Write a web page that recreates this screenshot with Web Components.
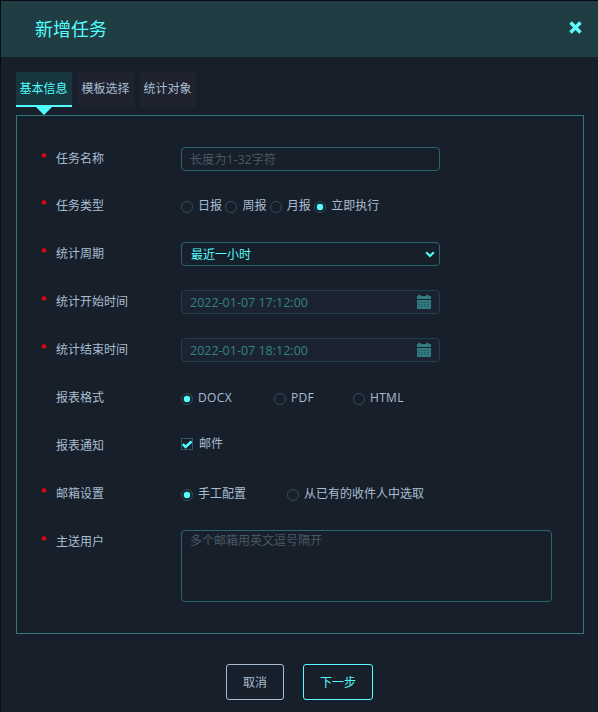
<!DOCTYPE html>
<html lang="zh-CN">
<head>
<meta charset="utf-8">
<title>新增任务</title>
<style>
  body {
    margin: 0;
    background-color: #090b14;
    font-family: "Open Sans", "Noto Sans CJK SC", sans-serif;
    font-size: 12px;
    color: #a9bdd2;
    --accent: #52fffe;
    --line: #31777b;
    --field-line: #2c656b;
  }
</style>
</head>
<body>
<task-dialog heading="新增任务">
  <tab-item slot="tabs" active>基本信息</tab-item>
  <tab-item slot="tabs">模板选择</tab-item>
  <tab-item slot="tabs">统计对象</tab-item>

  <form-row label="任务名称" required style="height: 47px">
    <text-field placeholder="长度为1-32字符" style="letter-spacing: .2px"></text-field>
  </form-row>
  <form-row label="任务类型" required>
    <radio-item style="width: 44.4px">日报</radio-item>
    <radio-item style="width: 44.4px">周报</radio-item>
    <radio-item style="width: 44.4px">月报</radio-item>
    <radio-item checked>立即执行</radio-item>
  </form-row>
  <form-row label="统计周期" required>
    <select-field>最近一小时</select-field>
  </form-row>
  <form-row label="统计开始时间" required>
    <date-field>2022-01-07 17:12:00</date-field>
  </form-row>
  <form-row label="统计结束时间" required>
    <date-field>2022-01-07 18:12:00</date-field>
  </form-row>
  <form-row label="报表格式">
    <radio-item checked style="width: 93px; letter-spacing: .4px">DOCX</radio-item>
    <radio-item style="width: 79px; letter-spacing: .3px">PDF</radio-item>
    <radio-item style="letter-spacing: .3px">HTML</radio-item>
  </form-row>
  <form-row label="报表通知">
    <check-item>邮件</check-item>
  </form-row>
  <form-row label="邮箱设置" required>
    <radio-item checked style="width: 106px">手工配置</radio-item>
    <radio-item>从已有的收件人中选取</radio-item>
  </form-row>
  <form-row label="主送用户" required>
    <text-field multiline placeholder="多个邮箱用英文逗号隔开"></text-field>
  </form-row>

  <action-button slot="actions">取消</action-button>
  <action-button slot="actions" primary>下一步</action-button>
</task-dialog>

<script>
class TaskDialog extends HTMLElement {
  constructor() {
    super();
    this.shadowDOM = this.attachShadow({ mode: 'open' });
  }

  connectedCallback() {
    this.render();
  }

  render() {
    this.shadowDOM.innerHTML = `
      <style>
        * {
          box-sizing: border-box;
        }

        :host {
          display: block;
          box-sizing: border-box;
          height: 712px;
          padding: 1px 0 0 1px;
          overflow: hidden;
        }

        .dialog {
          height: 711px;
          background-color: #17202a;
        }

        .dialog__header {
          display: flex;
          align-items: center;
          justify-content: space-between;
          height: 56px;
          padding: 0 16px 0 34px;
          background-color: #1f3d43;
          color: var(--accent);
        }

        .dialog__title {
          margin: 0;
          font-size: 18px;
          font-weight: 400;
          line-height: 56px;
        }

        .dialog__close {
          display: block;
          width: 13px;
          height: 13px;
          margin-top: -3px;
        }

        .dialog__tabs {
          display: flex;
          gap: 6px;
          padding: 15px 15px 0;
          height: 58px;
        }

        .dialog__panel {
          height: 519px;
          margin: 0 14px 0 15px;
          padding: 31px 0 0 24px;
          border: 1px solid var(--line);
        }

        .dialog__actions {
          display: flex;
          gap: 19px;
          padding: 30px 0 0 225px;
        }
      </style>
      <div class="dialog">
        <div class="dialog__header">
          <h1 class="dialog__title">${this.getAttribute('heading')}</h1>
          <svg class="dialog__close" viewBox="0 0 13 13">
            <path d="M2.8 2.8 10.2 10.2M10.2 2.8 2.8 10.2" stroke="#5ffffe" stroke-width="3.5" stroke-linecap="square" stroke-linejoin="round"/>
          </svg>
        </div>
        <div class="dialog__tabs"><slot name="tabs"></slot></div>
        <div class="dialog__panel"><slot></slot></div>
        <div class="dialog__actions"><slot name="actions"></slot></div>
      </div>
    `;
  }
}

class TabItem extends HTMLElement {
  constructor() {
    super();
    this.shadowDOM = this.attachShadow({ mode: 'open' });
  }

  connectedCallback() {
    this.render();
  }

  render() {
    this.shadowDOM.innerHTML = `
      <style>
        :host {
          display: block;
          width: 56px;
        }

        .tab {
          box-sizing: border-box;
          height: 35px;
          padding-right: 1px;
          line-height: 34px;
          text-align: center;
          background-color: #1f2330;
        }

        :host([active]) .tab {
          color: var(--accent);
          background-color: #17363e;
          border-bottom: 2px solid var(--accent);
        }

        .arrow {
          display: none;
          width: 0;
          margin: 0 auto;
          border: 8px solid transparent;
          border-top-color: var(--accent);
          border-bottom: 0;
        }

        :host([active]) .arrow {
          display: block;
        }
      </style>
      <div class="tab"><slot></slot></div>
      <div class="arrow"></div>
    `;
  }
}

class FormRow extends HTMLElement {
  constructor() {
    super();
    this.shadowDOM = this.attachShadow({ mode: 'open' });
  }

  connectedCallback() {
    this.render();
  }

  render() {
    const mark = this.hasAttribute('required') ? '*' : '';
    this.shadowDOM.innerHTML = `
      <style>
        :host {
          display: flex;
          align-items: flex-start;
          height: 48px;
        }

        .mark {
          width: 15px;
          color: #f00;
          font-family: "Liberation Sans", sans-serif;
          font-size: 13px;
          font-weight: 700;
          line-height: 21px;
        }

        .label {
          width: 125px;
          line-height: 24px;
        }

        .control {
          display: flex;
        }
      </style>
      <span class="mark">${mark}</span>
      <span class="label">${this.getAttribute('label')}</span>
      <div class="control"><slot></slot></div>
    `;
  }
}

class TextField extends HTMLElement {
  constructor() {
    super();
    this.shadowDOM = this.attachShadow({ mode: 'open' });
  }

  connectedCallback() {
    this.render();
  }

  render() {
    this.shadowDOM.innerHTML = `
      <style>
        :host {
          display: block;
          box-sizing: border-box;
          width: 259px;
          height: 24px;
          padding: 0 8px;
          border: 1px solid var(--field-line);
          border-radius: 4px;
          color: #4b5965;
          line-height: 24px;
        }

        :host([multiline]) {
          width: 371px;
          height: 72px;
          line-height: 20px;
        }
      </style>
      <span>${this.getAttribute('placeholder')}</span>
    `;
  }
}

class SelectField extends HTMLElement {
  constructor() {
    super();
    this.shadowDOM = this.attachShadow({ mode: 'open' });
  }

  connectedCallback() {
    this.render();
  }

  render() {
    this.shadowDOM.innerHTML = `
      <style>
        :host {
          display: flex;
          align-items: center;
          justify-content: space-between;
          box-sizing: border-box;
          width: 259px;
          height: 24px;
          padding: 0 4px 0 9px;
          border: 1px solid var(--field-line);
          border-radius: 4px;
          color: var(--accent);
          line-height: 23px;
        }

        svg {
          width: 10px;
          height: 7px;
        }
      </style>
      <span><slot></slot></span>
      <svg viewBox="0 0 10 7">
        <path d="M1.2 1.3 5 5l3.8-3.7" fill="none" stroke="#52fffe" stroke-width="2.1"/>
      </svg>
    `;
  }
}

class DateField extends HTMLElement {
  constructor() {
    super();
    this.shadowDOM = this.attachShadow({ mode: 'open' });
  }

  connectedCallback() {
    this.render();
  }

  render() {
    this.shadowDOM.innerHTML = `
      <style>
        :host {
          display: flex;
          align-items: center;
          justify-content: space-between;
          box-sizing: border-box;
          width: 259px;
          height: 24px;
          padding: 0 8px;
          border: 1px solid #213f48;
          border-radius: 4px;
          background-color: #1a232f;
          color: #348388;
          font-size: 12.5px;
          line-height: 22px;
        }

        span {
          padding-top: 2px;
        }

        svg {
          width: 14px;
          height: 14px;
        }
      </style>
      <span><slot></slot></span>
      <svg viewBox="0 0 14 14" shape-rendering="crispEdges">
        <path d="M0 1h1V0h3v1h5V0h3v1h2v3H0zM0 5h14v9H0z" fill="#2f7b80"/>
        <path d="M1 7.5h12M1 9.5h12M1 11.5h12" stroke="#225a63" stroke-dasharray="2 1"/>
      </svg>
    `;
  }
}

class RadioItem extends HTMLElement {
  constructor() {
    super();
    this.shadowDOM = this.attachShadow({ mode: 'open' });
  }

  connectedCallback() {
    this.render();
  }

  render() {
    const dot = this.hasAttribute('checked') ? '<circle cx="6" cy="6" r="3.2" fill="#52fffe"/>' : '';
    this.shadowDOM.innerHTML = `
      <style>
        :host {
          display: flex;
          gap: 5px;
          line-height: 24px;
          white-space: nowrap;
        }

        svg {
          flex: none;
          width: 12px;
          height: 12px;
          margin-top: 7px;
        }
      </style>
      <svg viewBox="0 0 12 12">
        <circle cx="6" cy="6" r="5.5" fill="none" stroke="#2d505a"/>
        ${dot}
      </svg>
      <span><slot></slot></span>
    `;
  }
}

class CheckItem extends HTMLElement {
  constructor() {
    super();
    this.shadowDOM = this.attachShadow({ mode: 'open' });
  }

  connectedCallback() {
    this.render();
  }

  render() {
    this.shadowDOM.innerHTML = `
      <style>
        :host {
          display: flex;
          gap: 6px;
          line-height: 20px;
        }

        svg {
          width: 12px;
          height: 12px;
          margin-top: 4px;
        }
      </style>
      <svg viewBox="0 0 12 12">
        <rect x=".5" y=".5" width="11" height="11" fill="none" stroke="#2c5a62"/>
        <path d="M1.8 6.2 4.6 9l6-5.6" fill="none" stroke="#52fffe" stroke-width="2.6"/>
      </svg>
      <span><slot></slot></span>
    `;
  }
}

class ActionButton extends HTMLElement {
  constructor() {
    super();
    this.shadowDOM = this.attachShadow({ mode: 'open' });
  }

  connectedCallback() {
    this.render();
  }

  render() {
    this.shadowDOM.innerHTML = `
      <style>
        :host {
          display: block;
          box-sizing: border-box;
          height: 36px;
          padding: 0 16px;
          border: 1px solid currentColor;
          border-radius: 3px;
          line-height: 35px;
        }

        :host([primary]) {
          color: var(--accent);
        }
      </style>
      <slot></slot>
    `;
  }
}

customElements.define('task-dialog', TaskDialog);
customElements.define('tab-item', TabItem);
customElements.define('form-row', FormRow);
customElements.define('text-field', TextField);
customElements.define('select-field', SelectField);
customElements.define('date-field', DateField);
customElements.define('radio-item', RadioItem);
customElements.define('check-item', CheckItem);
customElements.define('action-button', ActionButton);
</script>
</body>
</html>
